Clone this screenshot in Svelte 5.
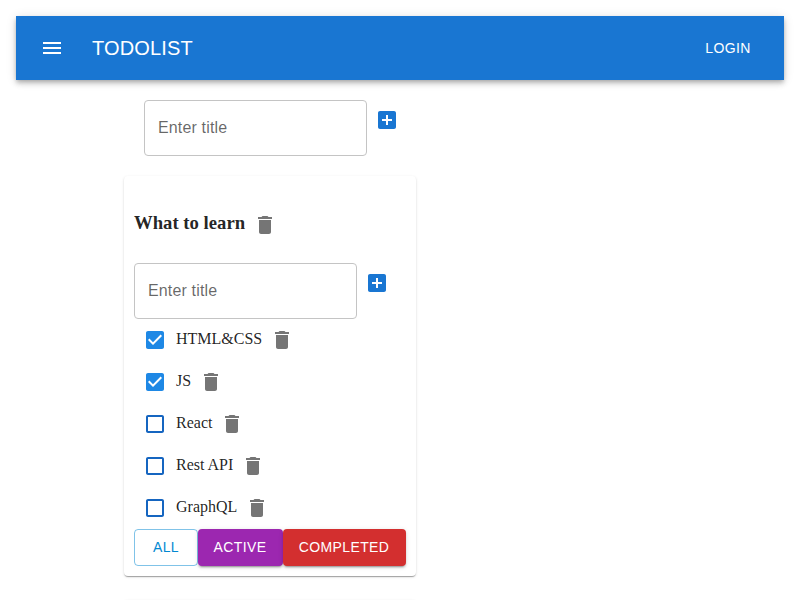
<script>
  const tasks = [
    { title: 'HTML&CSS', done: true, width: 86 },
    { title: 'JS', done: true, width: 15 },
    { title: 'React', done: false, width: 36 },
    { title: 'Rest API', done: false, width: 57 },
    { title: 'GraphQL', done: false, width: 61 }
  ];
</script>

{#snippet icon(d)}
  <svg viewBox="0 0 24 24" width="24" height="24" aria-hidden="true"><path {d} /></svg>
{/snippet}

{#snippet trash()}
  <button class="icon-button" aria-label="Delete">
    {@render icon('M6 19c0 1.1.9 2 2 2h8c1.1 0 2-.9 2-2V7H6v12zM19 4h-3.5l-1-1h-5l-1 1H5v2h14V4z')}
  </button>
{/snippet}

{#snippet addForm()}
  <div class="add-form">
    <div class="field"><span>Enter title</span></div>
    <button class="icon-button add" aria-label="Add">
      {@render icon('M19 3H5c-1.11 0-2 .9-2 2v14c0 1.1.89 2 2 2h14c1.1 0 2-.9 2-2V5c0-1.1-.9-2-2-2zm-2 10h-4v4h-2v-4H7v-2h4V7h2v4h4v2z')}
    </button>
  </div>
{/snippet}

<div class="page">
  <header>
    <button class="menu" aria-label="Menu">
      {@render icon('M3 18h18v-2H3v2zm0-5h18v-2H3v2zm0-7v2h18V6H3z')}
    </button>
    <div class="brand">TODOLIST</div>
    <button class="login">LOGIN</button>
  </header>
  <main>
    <div class="new-list">{@render addForm()}</div>
    <section class="card">
      <div class="heading"><h3>What to learn</h3>{@render trash()}</div>
      {@render addForm()}
      <div class="tasks">
        {#each tasks as task}
          <div class="task">
            <span class="check" class:done={task.done}>
              {#if task.done}
                {@render icon('M19 3H5c-1.11 0-2 .9-2 2v14c0 1.1.89 2 2 2h14c1.11 0 2-.9 2-2V5c0-1.1-.89-2-2-2zm-9 14l-5-5 1.41-1.41L10 14.17l7.59-7.59L19 8l-9 9z')}
              {:else}
                {@render icon('M19 5v14H5V5h14m0-2H5c-1.1 0-2 .9-2 2v14c0 1.1.9 2 2 2h14c1.1 0 2-.9 2-2V5c0-1.1-.9-2-2-2z')}
              {/if}
            </span>
            <span class="title" style:width="{task.width}px">{task.title}</span>
            {@render trash()}
          </div>
        {/each}
      </div>
      <div class="filters">
        <button class="all">ALL</button>
        <button class="active">ACTIVE</button>
        <button class="completed">COMPLETED</button>
      </div>
    </section>
    <section class="card next"></section>
  </main>
</div>

<style>
  :global(body) {
    background: #fff;
    overflow: hidden;
  }
  .page {
    box-sizing: border-box;
    height: 600px;
    padding: 16px;
    overflow: hidden;
    color: rgba(0, 0, 0, 0.87);
    font-family: 'Liberation Serif', 'Times New Roman', serif;
  }
  svg {
    display: block;
    fill: currentColor;
    flex: none;
  }
  button {
    box-sizing: border-box;
    margin: 0;
    border: 0;
    padding: 0;
    background: none;
    color: inherit;
    font: 14px/24.5px 'Liberation Sans', Arial, sans-serif;
    letter-spacing: 0.4px;
  }
  header {
    display: flex;
    align-items: center;
    box-sizing: border-box;
    height: 64px;
    padding: 0 24px;
    background: #1976d2;
    color: #fff;
    box-shadow: 0 2px 4px -1px rgba(0, 0, 0, 0.2), 0 4px 5px 0 rgba(0, 0, 0, 0.14),
      0 1px 10px 0 rgba(0, 0, 0, 0.12);
  }
  .menu {
    margin-right: 28px;
  }
  .brand {
    flex: 1;
    font: 20px/32px 'Liberation Sans', Arial, sans-serif;
    letter-spacing: 0.15px;
  }
  .login {
    width: 64px;
  }
  main {
    padding: 0 108px;
  }
  .new-list {
    padding: 20px;
  }
  .add-form {
    display: flex;
    align-items: flex-start;
    height: 56px;
  }
  .field {
    box-sizing: border-box;
    width: 223px;
    height: 56px;
    border: 1px solid #c4c4c4;
    border-radius: 4px;
    padding: 15px 13px;
    font: 16px/23px 'Liberation Sans', Arial, sans-serif;
    letter-spacing: 0.15px;
    color: rgba(0, 0, 0, 0.6);
  }
  .icon-button {
    padding: 8px;
    color: #757575;
  }
  .add {
    color: #1976d2;
  }
  .card {
    box-sizing: border-box;
    width: 292px;
    height: 400px;
    padding: 10px;
    border-radius: 4px;
    background: #fff;
    box-shadow: 0 2px 1px -1px rgba(0, 0, 0, 0.2), 0 1px 1px 0 rgba(0, 0, 0, 0.14),
      0 1px 3px 0 rgba(0, 0, 0, 0.12);
  }
  .next {
    margin-top: 24px;
  }
  .heading {
    display: flex;
    align-items: center;
    height: 77px;
  }
  h3 {
    width: 111px;
    margin: 0;
    padding-bottom: 3px;
    font-size: 18.72px;
    line-height: 22px;
    white-space: nowrap;
  }
  .task {
    display: flex;
    align-items: center;
    height: 42px;
  }
  .check {
    padding: 9px;
    color: #1565c0;
  }
  .check.done {
    color: #1e88e5;
  }
  .title {
    font-size: 16px;
    line-height: 18px;
    padding-bottom: 2px;
    white-space: nowrap;
  }
  .filters {
    display: flex;
  }
  .filters button {
    height: 37px;
    border-radius: 4px;
    color: #fff;
  }
  .filters .all {
    width: 64px;
    border: 1px solid rgba(2, 136, 209, 0.5);
    color: #0288d1;
  }
  .active,
  .completed {
    padding-right: 1px;
    box-shadow: 0 3px 1px -2px rgba(0, 0, 0, 0.2), 0 2px 2px 0 rgba(0, 0, 0, 0.14),
      0 1px 5px 0 rgba(0, 0, 0, 0.12);
  }
  .active {
    width: 85px;
    background: #9c27b0;
  }
  .completed {
    width: 123px;
    background: #d32f2f;
  }
</style>
